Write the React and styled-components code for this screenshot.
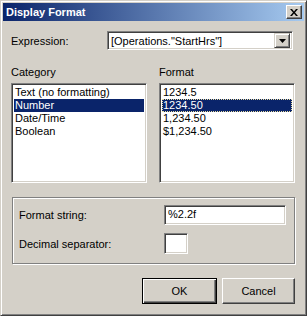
import React from 'react';
import styled, { createGlobalStyle } from 'styled-components';

const GlobalStyle = createGlobalStyle`
    html, body {
        margin: 0;
        padding: 0;
        background: #D4D0C8;
    }
    * {
        box-sizing: border-box;
    }
`

const Window = styled.div`
    width: 307px;
    height: 316px;
    background: #D4D0C8;
    border: 1px solid;
    border-color: #D4D0C8 #404040 #404040 #D4D0C8;
    box-shadow: inset 1px 1px 0 #FFFFFF, inset -1px -1px 0 #808080;
    padding: 2px;
    display: flex;
    flex-direction: column;
    font-family: "Liberation Sans", Arial, sans-serif;
    font-size: 11px;
    color: #000;
`

const TitleBar = styled.div`
    height: 18px;
    background: linear-gradient(to right, #0A246A, #A6CAF0);
    display: flex;
    align-items: center;
    justify-content: space-between;
    padding: 0 2px 0 3px;
`

const TitleText = styled.span`
    color: #FFFFFF;
    font-weight: bold;
    font-size: 11px;
`

const CloseButton = styled.div`
    width: 16px;
    height: 14px;
    background: #D4D0C8;
    border: 1px solid;
    border-color: #FFFFFF #404040 #404040 #FFFFFF;
    box-shadow: inset -1px -1px 0 #808080;
    display: flex;
    align-items: center;
    justify-content: center;
`

const Body = styled.div`
    flex: 1;
    padding: 10px 8px 0 8px;
    display: flex;
    flex-direction: column;
`

const ExpressionRow = styled.div`
    display: flex;
    align-items: center;
    height: 19px;
`

const Label = styled.span`
    width: ${props => props.width || 'auto'};
    flex-shrink: 0;
    white-space: nowrap;
`

const Sunken = styled.div`
    background: #FFFFFF;
    border: 1px solid;
    border-color: #808080 #FFFFFF #FFFFFF #808080;
    box-shadow: inset 1px 1px 0 #404040, inset -1px -1px 0 #D4D0C8;
    width: ${props => props.width}px;
    height: ${props => props.height}px;
    padding: 2px;
`

const Combo = styled(Sunken)`
    display: flex;
    align-items: center;
    padding: 2px 2px 2px 3px;
`

const ComboText = styled.span`
    flex: 1;
    white-space: nowrap;
`

const DropButton = styled.div`
    width: 16px;
    height: 15px;
    background: #D4D0C8;
    border: 1px solid;
    border-color: #D4D0C8 #404040 #404040 #D4D0C8;
    box-shadow: inset 1px 1px 0 #FFFFFF, inset -1px -1px 0 #808080;
    display: flex;
    align-items: center;
    justify-content: center;
`

const ListsRow = styled.div`
    display: flex;
    gap: 12px;
    margin-top: 16px;
`

const Column = styled.div`
    display: flex;
    flex-direction: column;
`

const ListLabel = styled.div`
    height: 17px;
    padding-left: ${props => props.indent || 0}px;
`

const ListBox = styled(Sunken)`
    padding: 2px;
`

const Item = styled.div`
    height: 13px;
    line-height: 13px;
    padding-left: 1px;
    white-space: nowrap;
    background: ${props => props.selected ? '#0A246A' : 'transparent'};
    color: ${props => props.selected ? '#FFFFFF' : '#000000'};
    outline: ${props => props.focused ? '1px dotted #E8DCA0' : 'none'};
    outline-offset: -1px;
`

const GroupBox = styled.div`
    margin-top: 14px;
    margin-left: 1px;
    width: 283px;
    height: 67px;
    border: 1px solid #808080;
    box-shadow: inset 1px 1px 0 #FFFFFF, 1px 1px 0 #FFFFFF;
    padding: 7px 0 0 6px;
    display: flex;
    flex-direction: column;
    gap: 8px;
`

const FieldRow = styled.div`
    display: flex;
    align-items: center;
`

const Field = styled(Sunken)`
    padding: 2px 3px;
    white-space: nowrap;
`

const ButtonRow = styled.div`
    display: flex;
    justify-content: flex-end;
    gap: 5px;
    margin-top: 14px;
    padding-right: 1px;
`

const Button = styled.div`
    width: ${props => props.width}px;
    height: 26px;
    background: #D4D0C8;
    display: flex;
    align-items: center;
    justify-content: center;
    border: 1px solid;
    border-color: ${props => props.primary ? '#000000' : '#FFFFFF #404040 #404040 #FFFFFF'};
    box-shadow: ${props => props.primary
        ? 'inset 1px 1px 0 #FFFFFF, inset -1px -1px 0 #404040, inset -2px -2px 0 #808080'
        : 'inset -1px -1px 0 #808080'};
`

const categories = ['Text (no formatting)', 'Number', 'Date/Time', 'Boolean'];
const formats = ['1234.5', '1234.50', '1,234.50', '$1,234.50'];

export default function App() {
    return (
        <>
            <GlobalStyle />
            <Window>
                <TitleBar>
                    <TitleText>Display Format</TitleText>
                    <CloseButton>
                        <svg width="8" height="7" viewBox="0 0 8 7">
                            <path d="M0 0h2l2 2.5L6 0h2L5 3.5 8 7H6L4 4.5 2 7H0l3-3.5z" fill="#000" />
                        </svg>
                    </CloseButton>
                </TitleBar>
                <Body>
                    <ExpressionRow>
                        <Label width="96px">Expression:</Label>
                        <Combo width={186} height={19}>
                            <ComboText>[Operations."StartHrs"]</ComboText>
                            <DropButton>
                                <svg width="7" height="4" viewBox="0 0 7 4">
                                    <path d="M0 0h7L3.5 4z" fill="#000" />
                                </svg>
                            </DropButton>
                        </Combo>
                    </ExpressionRow>
                    <ListsRow>
                        <Column>
                            <ListLabel>Category</ListLabel>
                            <ListBox width={136} height={100}>
                                {categories.map(c => (
                                    <Item key={c} selected={c === 'Number'}>{c}</Item>
                                ))}
                            </ListBox>
                        </Column>
                        <Column>
                            <ListLabel>Format</ListLabel>
                            <ListBox width={136} height={100}>
                                {formats.map(f => (
                                    <Item key={f} selected={f === '1234.50'} focused={f === '1234.50'}>{f}</Item>
                                ))}
                            </ListBox>
                        </Column>
                    </ListsRow>
                    <GroupBox>
                        <FieldRow>
                            <Label width="145px">Format string:</Label>
                            <Field width={122} height={20}>%2.2f</Field>
                        </FieldRow>
                        <FieldRow>
                            <Label width="145px">Decimal separator:</Label>
                            <Field width={24} height={21} />
                        </FieldRow>
                    </GroupBox>
                    <ButtonRow>
                        <Button primary width={75}>OK</Button>
                        <Button width={73}>Cancel</Button>
                    </ButtonRow>
                </Body>
            </Window>
        </>
    );
}
